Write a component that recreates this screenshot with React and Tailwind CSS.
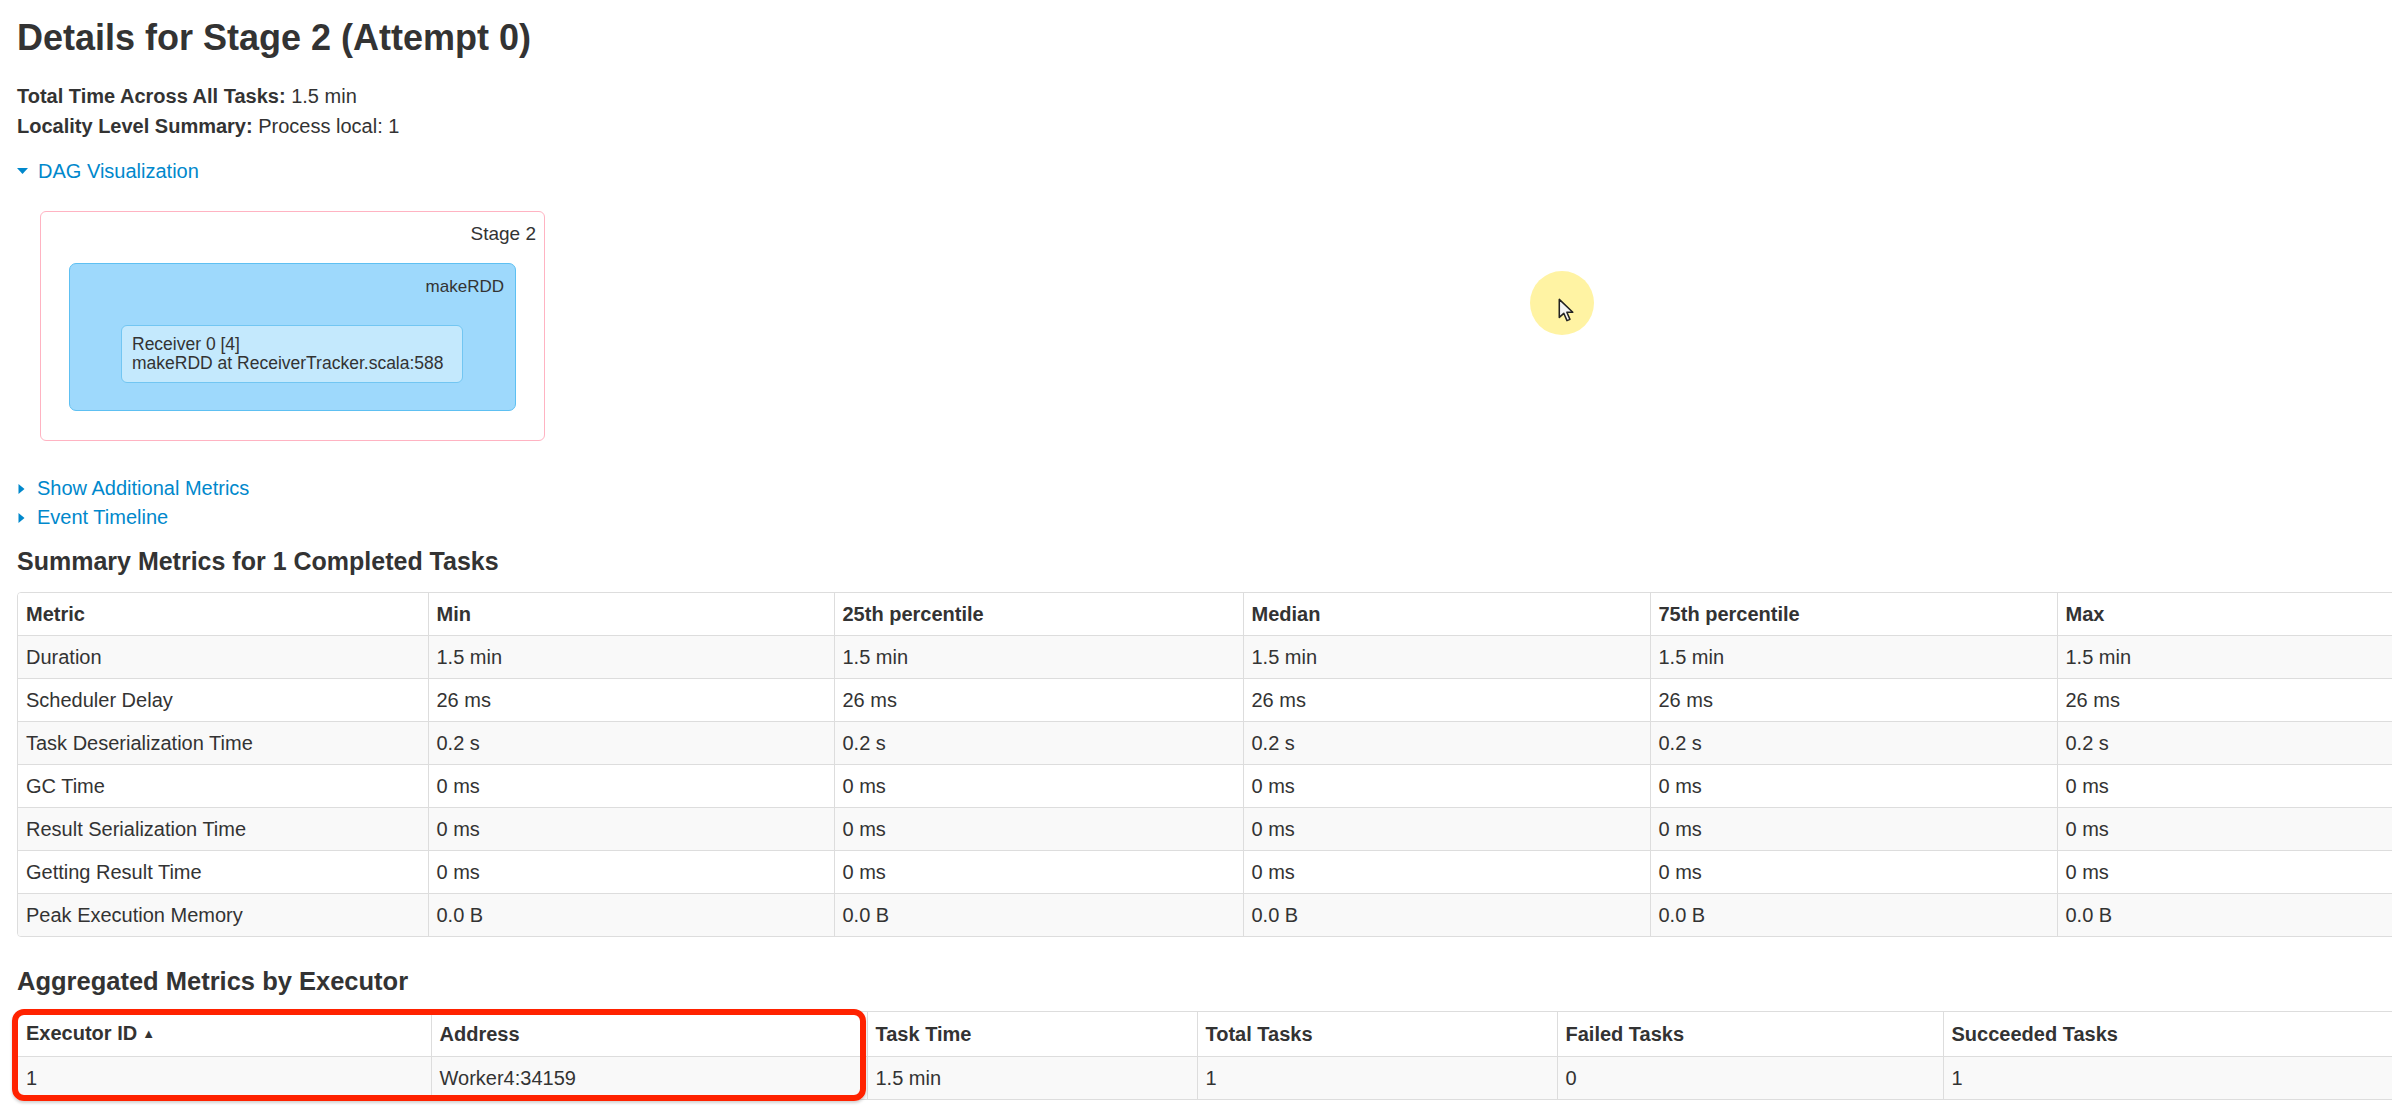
import React from "react";

const summaryCols = ["Metric", "Min", "25th percentile", "Median", "75th percentile", "Max"];
const summaryWidths = [410, 406, 409, 407, 407, 407];
const summaryRows = [
  ["Duration", "1.5 min"],
  ["Scheduler Delay", "26 ms"],
  ["Task Deserialization Time", "0.2 s"],
  ["GC Time", "0 ms"],
  ["Result Serialization Time", "0 ms"],
  ["Getting Result Time", "0 ms"],
  ["Peak Execution Memory", "0.0 B"],
];

const execCols = ["Executor ID", "Address", "Task Time", "Total Tasks", "Failed Tasks", "Succeeded Tasks"];
const execWidths = [413, 436, 330, 360, 386, 521];
const execRow = ["1", "Worker4:34159", "1.5 min", "1", "0", "1"];

function CaretRight() {
  return (
    <svg width="9" height="12" viewBox="0 0 9 12" className="mr-[11px] shrink-0">
      <path d="M1.5 1 L7.5 6 L1.5 11 Z" fill="#0088cc" />
    </svg>
  );
}

function CaretDown() {
  return (
    <svg width="11" height="8" viewBox="0 0 11 8" className="mr-[10px] shrink-0">
      <path d="M0 1 L11 1 L5.5 7 Z" fill="#0088cc" />
    </svg>
  );
}

function Cell({ children, head, first, top }) {
  const Tag = head ? "th" : "td";
  return (
    <Tag
      className={
        "px-[8px] py-[7px] text-left align-middle leading-[28px] text-[20px] " +
        (head ? "font-bold " : "font-normal ") +
        (first ? "" : "border-l border-l-[#dddddd] ") +
        (top ? "border-t border-t-[#dddddd]" : "")
      }
    >
      {children}
    </Tag>
  );
}

function DataTable({ cols, widths, rows, sortCol }) {
  const total = widths.reduce((a, b) => a + b, 0);
  return (
    <div
      className="rounded-[4px] border border-[#dddddd] overflow-hidden"
      style={{ width: total }}
    >
      <table className="table-fixed border-collapse w-full">
        <colgroup>
          {widths.map((w, i) => (
            <col key={i} style={{ width: w }} />
          ))}
        </colgroup>
        <thead>
          <tr className="bg-white">
            {cols.map((c, i) => (
              <Cell key={c} head first={i === 0}>
                {c}
                {sortCol === i && (
                  <span className="ml-[5px] text-[13px] align-middle relative -top-[1px]">▲</span>
                )}
              </Cell>
            ))}
          </tr>
        </thead>
        <tbody>
          {rows.map((r, ri) => (
            <tr key={ri} className={ri % 2 === 0 ? "bg-[#f9f9f9]" : "bg-white"}>
              {r.map((v, ci) => (
                <Cell key={ci} first={ci === 0} top>
                  {v}
                </Cell>
              ))}
            </tr>
          ))}
        </tbody>
      </table>
    </div>
  );
}

function DagViz() {
  return (
    <div className="ml-[23px] mt-[25px] w-[505px] h-[230px] rounded-[6px] border border-[#ffb3c2] bg-white pl-[28px] pr-[8px] pt-[12px]">
      <div className="text-right text-[19px] leading-[20px] text-[#333]">Stage 2</div>
      <div className="mt-[19px] mr-[20px] h-[148px] rounded-[7px] border border-[#5ec0f2] bg-[#9ed9fc] pt-[13px]">
        <div className="text-right text-[17px] leading-[20px] pr-[11px] text-[#333]">makeRDD</div>
        <div className="ml-[51px] mt-[28px] w-[342px] h-[58px] rounded-[6px] border border-[#72c6f2] bg-[#c4e9fd] px-[10px] pt-[9px] text-[17.5px] leading-[19px] text-[#333]">
          <div>Receiver 0 [4]</div>
          <div>makeRDD at ReceiverTracker.scala:588</div>
        </div>
      </div>
    </div>
  );
}

export default function App() {
  const summaryData = summaryRows.map(([name, v]) => [name, v, v, v, v, v]);
  return (
    <div className="relative w-full h-[1116px] overflow-hidden bg-white text-[#333] font-['Liberation_Sans',Arial,sans-serif]">
      <div className="w-[2500px] pl-[17px] pt-[14px]">
        <h3 className="text-[36px] font-bold leading-[48px]">Details for Stage 2 (Attempt 0)</h3>

        <div className="mt-[19px] text-[20px] leading-[30px]">
          <div>
            <strong>Total Time Across All Tasks:</strong> 1.5 min
          </div>
          <div>
            <strong>Locality Level Summary:</strong> Process local: 1
          </div>
        </div>

        <div className="mt-[15px] flex items-center text-[20px] leading-[30px] text-[#0088cc]">
          <CaretDown />
          <span>DAG Visualization</span>
        </div>

        <DagViz />

        <div className="mt-[33px] text-[20px] leading-[29px] text-[#0088cc]">
          <div className="flex items-center">
            <CaretRight />
            <span>Show Additional Metrics</span>
          </div>
          <div className="flex items-center">
            <CaretRight />
            <span>Event Timeline</span>
          </div>
        </div>

        <h4 className="mt-[12px] text-[25px] font-bold leading-[34px]">Summary Metrics for 1 Completed Tasks</h4>
        <div className="mt-[14px]">
          <DataTable cols={summaryCols} widths={summaryWidths} rows={summaryData} />
        </div>

        <h4 className="mt-[27px] text-[25.5px] font-bold leading-[34px]">Aggregated Metrics by Executor</h4>
        <div className="relative mt-[13px]">
          <DataTable cols={execCols} widths={execWidths} rows={[execRow]} sortCol={0} />
          <div className="absolute left-[-5px] top-[-2px] w-[854px] h-[92px] rounded-[12px] border-[6px] border-[#ff2200] shadow-[0_2px_3px_rgba(0,0,0,0.18)] pointer-events-none" />
        </div>
      </div>

      {/* cursor highlight */}
      <div className="absolute left-[1530px] top-[271px] w-[64px] h-[64px] rounded-full bg-[#fff3a3]" />
      <svg
        className="absolute left-[1558px] top-[298px]"
        width="18"
        height="26"
        viewBox="0 0 14 20"
      >
        <path
          d="M1 1 L1 15 L4.5 11.8 L7 17.5 L9.3 16.5 L6.9 11 L11.5 11 Z"
          fill="#f4f4f4"
          stroke="#222"
          strokeWidth="1.2"
          strokeLinejoin="round"
        />
      </svg>
    </div>
  );
}
